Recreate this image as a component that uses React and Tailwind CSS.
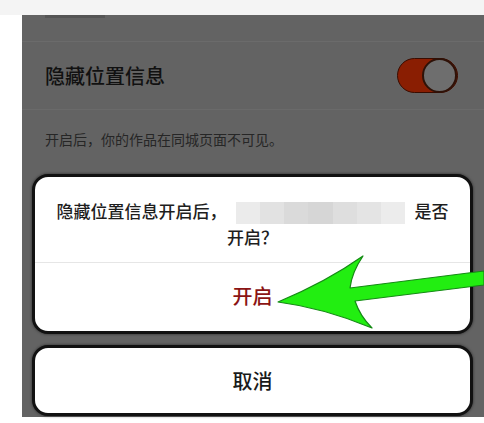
import React from "react";

const font = "font-['Noto_Sans_CJK_SC','Noto_Sans',sans-serif]";

const Toggle = () => (
  <div className="flex h-[35px] w-[61px] items-center justify-end rounded-full border border-[#3a0c00] bg-[#8a1e02]">
    <div className="h-[35px] w-[35px] rounded-full border-[2px] border-[#2e1208] bg-[#6e6e6e]" />
  </div>
);

const Blurred = () => (
  <span className="mx-[9px] inline-flex h-[22px] w-[170px] align-middle">
    <span className="flex-1 bg-[#ebebeb]" />
    <span className="flex-1 bg-[#e2e2e2]" />
    <span className="flex-1 bg-[#dadada]" />
    <span className="flex-1 bg-[#d6d6d6]" />
    <span className="flex-1 bg-[#dedede]" />
    <span className="flex-1 bg-[#e4e4e4]" />
    <span className="flex-1 bg-[#ececec]" />
  </span>
);

const Arrow = () => (
  <svg
    className="pointer-events-none absolute left-0 top-0"
    width="484"
    height="423"
    viewBox="0 0 484 423"
  >
    <path
      d="M278 302 Q326 282 363 256 Q352 272 350 288 L484 271 L484 285 L355 301 Q360 316 372 328 Q324 308 278 302 Z"
      fill="#22ee11"
      stroke="#148a14"
      strokeWidth="1.2"
      strokeLinejoin="round"
    />
  </svg>
);

export default function App() {
  return (
    <div className={`relative flex h-[423px] w-[484px] flex-col overflow-hidden bg-white ${font}`}>
      <div className="h-[15px] bg-[#f4f4f4]" />
      <div className="flex">
        <div className="w-[22px] bg-white" />
        <div className="flex h-[402px] flex-1 flex-col bg-[#636363]">
          {/* header remnant */}
          <div className="h-[27px] border-b border-[#6b6b6b] pl-[23px]">
            <div className="h-[3px] w-[60px] bg-[#555555]" />
          </div>

          {/* setting row */}
          <div className="flex h-[68px] items-center justify-between border-b border-[#6a6a6a] pl-[23px] pr-[26px]">
            <span className="text-[20px] font-medium leading-none text-[#111111]">隐藏位置信息</span>
            <Toggle />
          </div>

          <div className="flex h-[58px] items-center pl-[23px]">
            <span className="text-[14px] text-[#262626]">开启后，你的作品在同城页面不可见。</span>
          </div>

          {/* dialog */}
          <div className="mt-[6px] flex flex-col gap-[11px] pl-[10px] pr-[11px]">
            <div className="flex h-[160px] flex-col rounded-[16px] border-[3px] border-[#111111] bg-white shadow-[0_0_3px_rgba(0,0,0,0.6)]">
              <div className="border-b border-[#e6e6e6] px-[16px] pb-[13px] pt-[21px] text-center text-[17px] font-medium leading-[25px] text-[#1e1e1e]">
                隐藏位置信息开启后，<Blurred />是否
                <br />
                开启？
              </div>
              <div className="flex flex-1 items-center justify-center pb-[2px] text-[20px] font-medium text-[#8b1414]">
                开启
              </div>
            </div>
            <div className="flex h-[71px] items-center justify-center rounded-[16px] border-[3px] border-[#111111] bg-white text-[20px] font-medium text-[#1a1a1a] shadow-[0_0_3px_rgba(0,0,0,0.6)]">
              取消
            </div>
          </div>
        </div>
      </div>
      <Arrow />
    </div>
  );
}
